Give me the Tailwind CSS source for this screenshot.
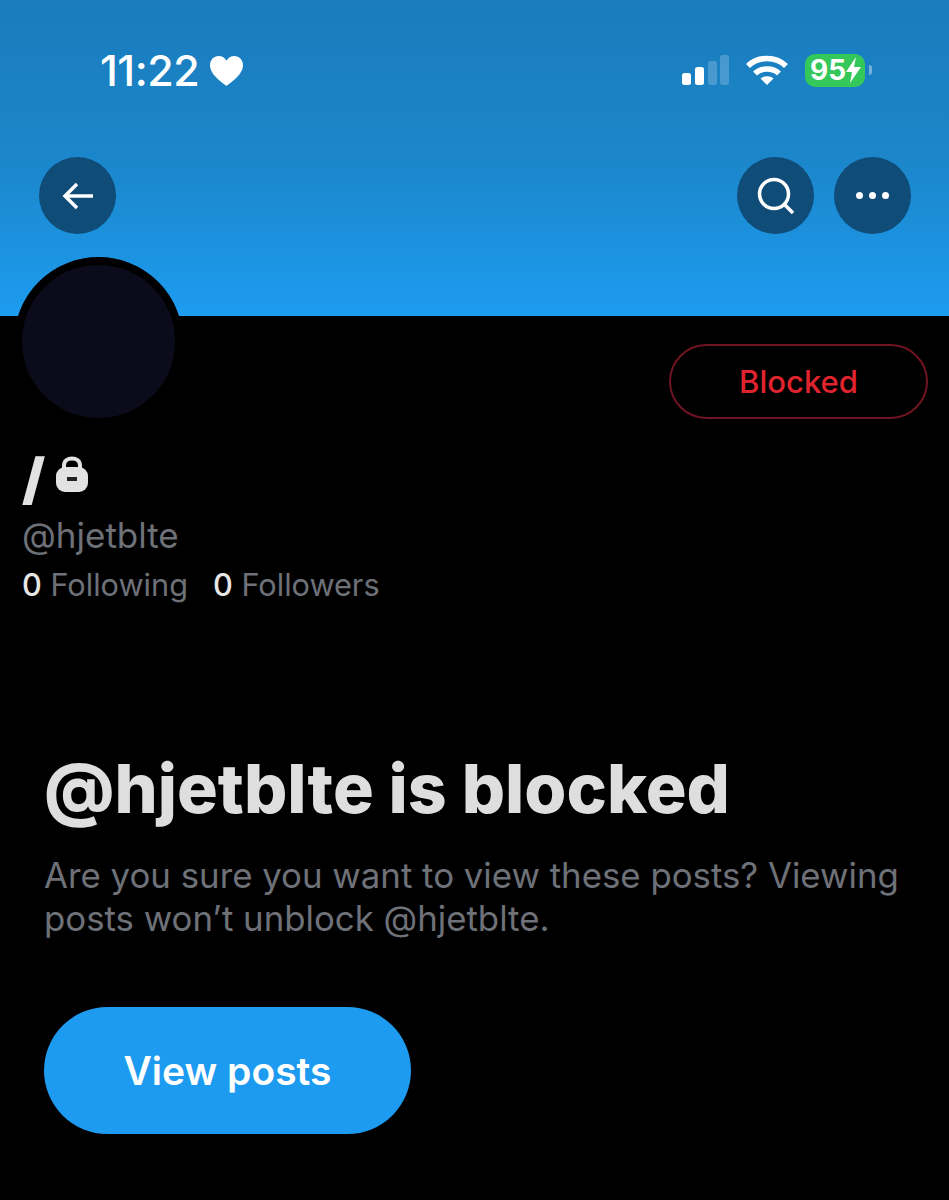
<!DOCTYPE html>
<html lang="en">
<head>
    <meta charset="UTF-8">
    <meta name="viewport" content="width=device-width, initial-scale=1.0">
    <script src="https://cdn.jsdelivr.net/npm/@tailwindcss/browser@4"></script>
    <title>Blocked profile</title>
</head>
<body class="bg-black">
    <div class="w-[949px] h-[1200px] overflow-hidden bg-black font-['Inter',sans-serif]">
        <!-- banner -->
        <header class="h-[316px] bg-gradient-to-b from-[#1a7cbc] via-[#1b86ca] to-[#1d9cf0] pt-[50px] pl-[39px] pr-[38px]">
            <div class="flex items-center justify-between h-[40px]">
                <div class="flex items-center pl-[61px] text-white">
                    <span class="text-[43px] font-medium tracking-[-0.5px] leading-[40px]">11:22</span>
                    <svg class="w-[35px] h-[32px] ml-[10px] mt-[1px]" viewBox="0 0 36 33" fill="#fff"><path d="M18 32C14 28.6 1 20.5 1 10.6 1 5 5 1 10 1c3.500 0 6.400 1.800 8 5 1.600-3.200 4.500-5 8-5 5 0 9 4 9 9.600C35 20.500 22 28.600 18 32z"/></svg>
                </div>
                <div class="flex items-center text-white pr-[46px]">
                    <svg class="w-[48px] h-[32px]" viewBox="0 0 48 32" fill="#fff"><rect x="1" y="19" width="9" height="12" rx="2.500"/><rect x="14" y="13" width="9" height="18" rx="2.500"/><rect x="27" y="7" width="9" height="24" rx="2.500" fill-opacity=".2"/><rect x="39" y="1" width="9" height="30" rx="2.500" fill-opacity=".2"/></svg>
                    <svg class="w-[42px] h-[32px] ml-[17px]" viewBox="0 0 42 32" fill="none" stroke="#fff" stroke-width="5.500"><path d="M2 12C12 2 30 2 40 12"/><path d="M9 19.500C15 13.500 27 13.500 33 19.500"/><path d="M21 31l-6.500-6.500c3.500-3 9.500-3 13 0z" fill="#fff" stroke="none"/></svg>
                    <div class="relative ml-[17px] w-[60px] h-[33px] rounded-[10px] bg-[#34c759] flex items-center pl-[5px] text-white text-[28px] font-bold leading-none">
                        <span>95</span>
                        <svg class="w-[15px] h-[26px]" viewBox="0 0 15 26" fill="#fff"><path d="M10 0L0 15h6l-2 11 11-16H8z"/></svg>
                        <span class="absolute right-[-7px] top-[11px] w-[3px] h-[10px] rounded-r-full bg-white/40"></span>
                    </div>
                </div>
            </div>
            <div class="flex items-center justify-between mt-[67px]">
                <button class="w-[77px] h-[77px] rounded-full bg-[#0f4c78] flex items-center justify-center">
                    <svg class="w-[32px] h-[28px]" viewBox="0 0 32 28" fill="none" stroke="#fff" stroke-width="3.500"><path d="M31 14H3"/><path d="M15 2L3 14l12 12"/></svg>
                </button>
                <div class="flex gap-[20px]">
                    <button class="w-[77px] h-[77px] rounded-full bg-[#0f4c78] flex items-center justify-center">
                        <svg class="w-[38px] h-[38px] mt-[1px]" viewBox="0 0 38 38" fill="none" stroke="#fff" stroke-width="3.500"><circle cx="17" cy="17" r="14.500"/><path d="M27.500 27.500L36 36"/></svg>
                    </button>
                    <button class="w-[77px] h-[77px] rounded-full bg-[#0f4c78] flex items-center justify-center gap-[6px]">
                        <span class="w-[7px] h-[7px] rounded-full bg-white"></span>
                        <span class="w-[7px] h-[7px] rounded-full bg-white"></span>
                        <span class="w-[7px] h-[7px] rounded-full bg-white"></span>
                    </button>
                </div>
            </div>
        </header>

        <!-- profile -->
        <section class="relative pl-[22px]">
            <div class="absolute left-[14px] top-[-59px] w-[169px] h-[169px] rounded-full bg-[#0b0b1c] border-[8px] border-black"></div>
            <div class="flex justify-end pt-[28px] pr-[21px]">
                <div class="w-[259px] h-[75px] pt-[1px] rounded-full border-2 border-[#6f1420] flex items-center justify-center text-[#e0242f] text-[31px] font-medium">Blocked</div>
            </div>
            <div class="flex items-center mt-[36px] h-[50px]">
                <span class="text-[56px] leading-[50px] font-black text-[#e2e2e2] mt-[-3px]">/</span>
                <svg class="w-[32px] h-[36px] ml-[11px] mb-[13px]" viewBox="0 0 32 36" fill="none"><path d="M8 14V9.500C8 5 11.500 2.500 16 2.500S24 5 24 9.500V14" stroke="#e2e2e2" stroke-width="4"/><rect y="11" width="32" height="25" rx="9" fill="#e2e2e2"/><rect x="11" y="21" width="10" height="4" fill="#222"/></svg>
            </div>
            <p class="mt-[10px] text-[35px] leading-[40px] text-[#6e7178]">@hjetblte</p>
            <div class="flex mt-[10px] text-[30.700px] leading-[40px] text-[#6e7178]">
                <p><span class="font-medium text-[#e7e7e7]">0</span> Following</p>
                <p class="ml-[25px]"><span class="font-medium text-[#e7e7e7]">0</span> Followers</p>
            </div>
        </section>

        <!-- blocked message -->
        <section class="pl-[45px] pr-[40px] mt-[147px]">
            <h1 class="ml-[-1px] text-[68px] leading-[72px] font-extrabold text-[#dedede]">@hjetblte is blocked</h1>
            <p class="mt-[30px] ml-[-1px] text-[34.800px] leading-[43px] text-[#6e7178]">Are you sure you want to view these posts? Viewing posts won’t unblock @hjetblte.</p>
            <button class="mt-[67px] ml-[-1px] w-[367px] h-[127px] pt-[2px] rounded-full bg-[#1d9bf0] text-white text-[39px] font-semibold">View posts</button>
        </section>
    </div>
</body>
</html>
